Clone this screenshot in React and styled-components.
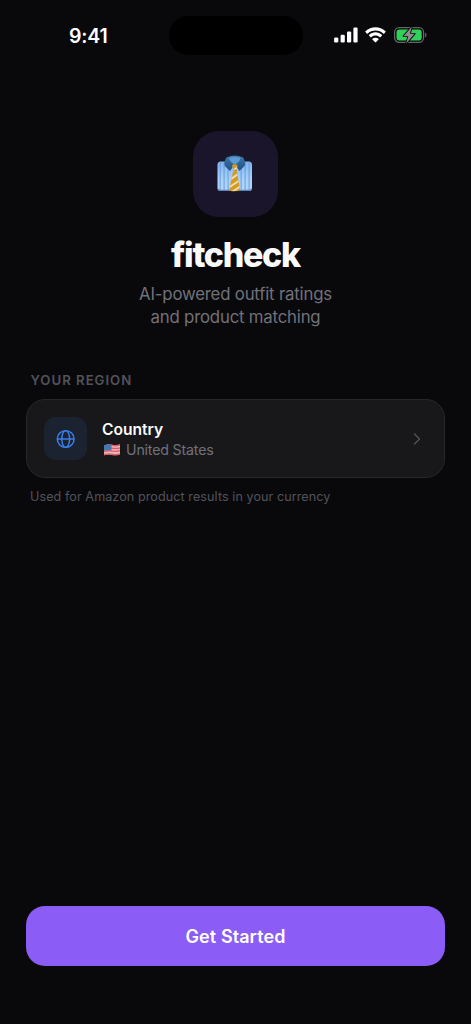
import React from 'react';
import styled, { createGlobalStyle } from 'styled-components';

const App = () => (
    <>
        <GlobalStyle />
        <Screen>
            <StatusBar>
                <Time>9:41</Time>
                <Island />
                <StatusIcons>
                    <SignalIcon />
                    <WifiIcon />
                    <BatteryIcon />
                </StatusIcons>
            </StatusBar>
            <Hero>
                <LogoTile>
                    <ShirtIcon />
                </LogoTile>
                <Title>fitcheck</Title>
                <Subtitle>
                    AI-powered outfit ratings
                    <br />
                    and product matching
                </Subtitle>
            </Hero>
            <Section>
                <SectionLabel>YOUR REGION</SectionLabel>
                <RegionCard type="button">
                    <RegionTile>
                        <GlobeIcon />
                    </RegionTile>
                    <RegionText>
                        <RegionTitle>Country</RegionTitle>
                        <RegionValue>
                            <FlagIcon />
                            <span>United States</span>
                        </RegionValue>
                    </RegionText>
                    <ChevronIcon />
                </RegionCard>
                <Hint>Used for Amazon product results in your currency</Hint>
            </Section>
            <Footer>
                <StartButton type="button">Get Started</StartButton>
            </Footer>
        </Screen>
    </>
);

const SignalIcon = () => (
    <svg width="24" height="16" viewBox="0 0 24 16" fill="#fff">
        <rect x="0.1" y="10.4" width="4.2" height="5" rx="1.2" />
        <rect x="6.6" y="7.8" width="4.2" height="7.6" rx="1.2" />
        <rect x="13" y="4.4" width="4.2" height="11" rx="1.2" />
        <rect x="19.4" y="0.6" width="4.2" height="14.8" rx="1.2" />
    </svg>
);

const WifiIcon = () => (
    <svg width="21" height="16" viewBox="0 0 17 12.4" fill="#fff">
        <path d="M8.5 2.5c2.4 0 4.7.9 6.4 2.6.1.1.3.1.5 0l1.2-1.3c.2-.2.2-.4 0-.6-4.5-4.3-11.7-4.3-16.2 0-.2.2-.2.4 0 .6l1.2 1.3c.1.1.3.1.5 0 1.7-1.7 4-2.6 6.4-2.6z" />
        <path d="M8.5 6.6c1.3 0 2.6.5 3.5 1.4.1.1.4.1.5 0l1.3-1.3c.1-.2.1-.4 0-.5-3-2.9-7.6-2.9-10.6 0-.1.1-.1.3 0 .5l1.3 1.3c.1.1.4.1.5 0 1-.9 2.2-1.4 3.5-1.4z" />
        <path d="M11 9.3c.1.1.1.4 0 .5l-2.2 2.3c-.2.1-.4.1-.6 0L6 9.8c-.1-.1-.1-.4 0-.5 1.5-1.2 3.5-1.2 5 0z" />
    </svg>
);

const BatteryIcon = () => (
    <svg width="34" height="18" viewBox="0 0 34 18">
        <rect x="0.6" y="1.7" width="29" height="14.6" rx="4.6" fill="none" stroke="#66676a" strokeWidth="1.2" />
        <rect x="2.5" y="3.6" width="25.2" height="10.8" rx="2.9" fill="#30d158" />
        <path d="M31.1 6.5c1.9.9 1.9 4.1 0 5z" fill="#66676a" />
        <path
            d="M17.9.6 9.6 10.2h4.7L12.2 17.400 20.600 7.800h-4.700z"
            fill="#8e8e91"
            stroke="#09090b"
            strokeWidth="1.8"
            strokeLinejoin="round"
            paintOrder="stroke"
        />
    </svg>
);

const ShirtIcon = () => (
    <svg width="35.5" height="37.5" viewBox="0 0 36 38">
        <defs>
            <linearGradient id="cloth" x1="0" y1="0" x2="0" y2="1">
                <stop offset="0" stopColor="#7fb4ee" />
                <stop offset="0.6" stopColor="#a9d2fa" />
                <stop offset="1" stopColor="#b2d6fa" />
            </linearGradient>
            <linearGradient id="collar" x1="0" y1="0" x2="0" y2="1">
                <stop offset="0" stopColor="#3a76ac" />
                <stop offset="1" stopColor="#1f5180" />
            </linearGradient>
            <clipPath id="tie">
                <path d="M15.2 10.2Q18 8.300 20.800 10.200L19.800 15.500 23.200 33.500Q23.400 36.700 20.500 36.700H15Q12.400 36.700 12.700 33.500L16.500 15.500z" />
            </clipPath>
        </defs>
        <path d="M3 6.5h30q2.500.5 2.500 3v24q0 3-3 3h-29q-3 0-3-3v-24q0-2.500 2.500-3z" fill="url(#cloth)" />
        <g fill="#5b93d8" opacity="0.55">
            <rect x="2.5" y="7" width="1.5" height="29" />
            <rect x="6.5" y="7" width="1.5" height="29" />
            <rect x="10.5" y="7" width="1.5" height="29" />
            <rect x="23.8" y="7" width="1.5" height="29" />
            <rect x="27.8" y="7" width="1.5" height="29" />
            <rect x="31.8" y="7" width="1.5" height="29" />
        </g>
        <path d="M.8 34.5q.4 2 2.700 2h29q2.300 0 2.700-2v-1q-1 1.700-2.700 1.700h-29Q1.500 35.200.8 33.500z" fill="#5a83b8" />
        <path d="M9.500 3Q18-2 26.500 3L19.500 11h-3z" fill="#3f7bb0" />
        <path d="M12 3Q18 .8 24 3L23.500 6.500 18.500 9.500 12.500 6.500z" fill="#5f9bd2" />
        <path d="M9.800 2.200Q6.600 6.500 7.800 11L13.200 16.200 17.600 9.800Q12.500 7 11.800 1.800z" fill="url(#collar)" />
        <path d="M26.200 2.200Q29.400 6.500 28.200 11L22.800 16.200 18.400 9.800Q23.500 7 24.200 1.800z" fill="url(#collar)" />
        <g clipPath="url(#tie)">
            <rect x="12" y="8" width="12" height="30" fill="#d49a26" />
            <path d="M12 19l11-8M12 26l11-8M12 33l12-8M13 39l12-8" stroke="#f0dcae" strokeWidth="1.9" />
            <path d="M15 15.5h6" stroke="#9c6c1c" strokeWidth="0.7" />
        </g>
    </svg>
);

const GlobeIcon = () => (
    <svg width="20" height="20" viewBox="0 0 20 20" fill="none" stroke="#3b82f6" strokeWidth="1.4">
        <circle cx="9.7" cy="10" r="8.4" />
        <ellipse cx="9.7" cy="10" rx="3.9" ry="8.4" />
        <path d="M1.3 10h16.8" />
    </svg>
);

const FlagIcon = () => (
    <svg width="16" height="12" viewBox="0 0 16 12">
        <path d="M0 1.3Q4-.1 8 .8T16 .5V10.5Q12 11.7 8 10.9T0 11.3z" fill="#eab9bf" />
        <path
            d="M0 2Q4 .6 8 1.4T16 1M0 4.7Q4 3.4 8 4.2T16 3.9M0 7.6Q4 6.3 8 7.1T16 6.7M0 10.6Q4 9.3 8 10.2T16 9.9"
            stroke="#e05c67"
            strokeWidth="1.4"
            fill="none"
        />
        <path d="M0 1.3Q4-.1 7.5.7V6.4Q4 5.7 0 6.8z" fill="#4678ae" />
    </svg>
);

const ChevronIcon = () => (
    <svg width="8" height="14" viewBox="0 0 8 14" fill="none" stroke="#52525b" strokeWidth="1.4" strokeLinecap="round" strokeLinejoin="round">
        <path d="M1.5 2 6.5 7l-5 5" />
    </svg>
);

const GlobalStyle = createGlobalStyle`
    * {
        box-sizing: border-box;
    }

    body {
        margin: 0;
        background: #09090b;
        font-family: Inter, 'Liberation Sans', sans-serif;
        -webkit-font-smoothing: antialiased;
    }

    svg {
        display: block;
        flex-shrink: 0;
    }
`;

const Screen = styled.main`
    display: flex;
    flex-direction: column;
    height: 1024px;
    overflow: hidden;
    background: #09090b;
    color: #fafafa;
`;

const StatusBar = styled.header`
    display: grid;
    grid-template-columns: 1fr 134px 1fr;
    align-items: center;
    height: 70px;
    flex-shrink: 0;
`;

const Time = styled.div`
    padding: 1px 0 0 69px;
    font-size: 19.5px;
    line-height: 24px;
    font-weight: 600;
    letter-spacing: -0.2px;
    color: #fff;
`;

const Island = styled.div`
    height: 39px;
    border-radius: 20px;
    background: #000;
`;

const StatusIcons = styled.div`
    display: flex;
    align-items: center;
    gap: 7.5px;
    padding-left: 31px;
`;

const Hero = styled.section`
    display: flex;
    flex-direction: column;
    align-items: center;
    margin-top: 61px;
`;

const LogoTile = styled.div`
    display: flex;
    align-items: center;
    justify-content: center;
    width: 85.5px;
    height: 85.5px;
    padding-right: 1px;
    border-radius: 26px;
    background: #1b152b;
`;

const Title = styled.h1`
    margin: 17.5px 0 0;
    font-size: 34px;
    line-height: 41px;
    font-weight: 800;
    letter-spacing: -1.3px;
`;

const Subtitle = styled.p`
    margin: 7.5px 0 0;
    font-size: 16.8px;
    line-height: 23.5px;
    letter-spacing: -0.2px;
    text-align: center;
    color: #71717a;
`;

const Section = styled.section`
    display: flex;
    flex-direction: column;
    margin-top: 42.5px;
    padding: 0 26px;
`;

const SectionLabel = styled.h2`
    margin: 0 0 11px 4.5px;
    font-size: 13.2px;
    line-height: 16px;
    font-weight: 600;
    letter-spacing: 0.98px;
    color: #52525b;
`;

const RegionCard = styled.button`
    display: flex;
    align-items: center;
    height: 79px;
    padding: 0 23px 0 17px;
    border: 1px solid #27272a;
    border-radius: 19px;
    background: #18181a;
    color: inherit;
    font-family: inherit;
    text-align: left;
`;

const RegionTile = styled.div`
    display: flex;
    align-items: center;
    justify-content: center;
    width: 43px;
    height: 43px;
    border-radius: 12px;
    background: #1c2330;
`;

const RegionText = styled.div`
    flex: 1;
    padding: 2px 0 0 15px;
`;

const RegionTitle = styled.div`
    font-size: 15.6px;
    line-height: 20px;
    font-weight: 600;
`;

const RegionValue = styled.div`
    display: flex;
    align-items: center;
    gap: 6px;
    padding-left: 2px;
    font-size: 14.2px;
    line-height: 20px;
    letter-spacing: -0.18px;
    color: #71717a;
`;

const Hint = styled.p`
    margin: 10px 0 0 4px;
    font-size: 12.6px;
    line-height: 18px;
    letter-spacing: 0.07px;
    color: #52525b;
`;

const Footer = styled.footer`
    display: flex;
    margin-top: auto;
    padding: 0 26px 58px;
`;

const StartButton = styled.button`
    flex: 1;
    height: 60px;
    padding: 0;
    border: 0;
    border-radius: 19px;
    background: #8b5cf6;
    color: #fff;
    font-family: inherit;
    font-size: 18px;
    font-weight: 600;
    letter-spacing: 0.08px;
`;

export default App;
